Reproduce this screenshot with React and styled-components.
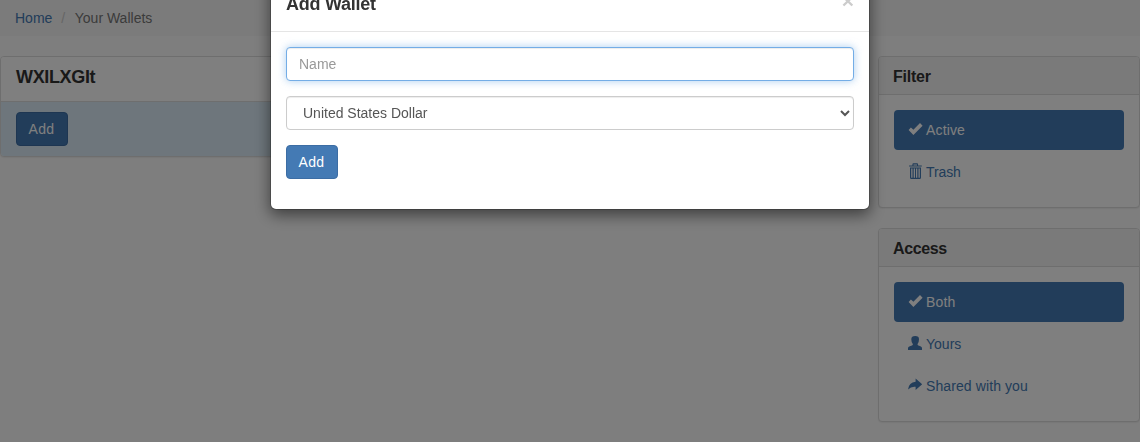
import React from 'react';
import styled, { createGlobalStyle } from 'styled-components';

const GlobalStyle = createGlobalStyle`
  *, *::before, *::after { box-sizing: border-box; }
  body {
    margin: 0;
    height: 442px;
    overflow: hidden;
    background: #fcfcfc;
    color: #333;
    font: 14px/20px "Liberation Sans", Arial, sans-serif;
  }
`;

const Breadcrumb = styled.ol`
  display: flex;
  margin: 0 0 20px;
  padding: 8px 15px;
  list-style: none;
  background: #f6f6f6;
`;

const Crumb = styled.li`
  color: #777;
  &:not(:first-child)::before {
    content: '/';
    padding: 0 9.5px 0 9px;
    color: #ccc;
  }
`;

const Link = styled.a`
  color: #447ab4;
  text-decoration: none;
`;

const Columns = styled.div`
  display: grid;
  grid-template-columns: 848px 262px;
  column-gap: 30px;
  align-items: start;
`;

const Sidebar = styled.aside`
  display: flex;
  flex-direction: column;
  gap: 20px;
`;

const Panel = styled.section`
  background: #fff;
  border: 1px solid #ddd;
  border-radius: 4px;
  box-shadow: 0 1px 1px rgba(0, 0, 0, 0.05);
  overflow: hidden;
`;

const PanelHeading = styled.header`
  height: ${(p) => (p.$large ? '45px' : '38px')};
  padding: ${(p) => (p.$large ? '10px 15px' : '10px 14px')};
  background: ${(p) => (p.$large ? '#fff' : '#f5f5f5')};
  border-bottom: 1px solid #ddd;
`;

const PanelTitle = styled.h3`
  margin: 0;
  font-size: ${(p) => (p.$large ? '18px' : '16px')};
  font-weight: 700;
  line-height: 20px;
  letter-spacing: ${(p) => p.$spacing || '0'};
`;

const PanelFooter = styled.footer`
  display: flex;
  padding: 10px 15px;
  background: #dcedf8;
`;

const PanelBody = styled.div`
  padding: 15px;
`;

const Button = styled.button`
  width: 52px;
  height: 34px;
  padding: 0 1px 0 0;
  color: #fff;
  font: inherit;
  letter-spacing: 0.3px;
  background: #447ab4;
  border: 1px solid #3c6da4;
  border-radius: 4px;
`;

const Pills = styled.nav`
  display: flex;
  flex-direction: column;
  gap: 2px;
`;

const Pill = styled.a`
  display: flex;
  align-items: center;
  gap: 4px;
  height: 40px;
  padding: 0 14px;
  color: ${(p) => (p.$active ? '#fff' : '#447ab4')};
  background: ${(p) => (p.$active ? '#447ab4' : 'transparent')};
  border-radius: 4px;
`;

const PillLabel = styled.span`
  letter-spacing: ${(p) => p.$spacing || '0'};
`;

const Icon = styled.svg`
  width: 14px;
  height: 16px;
  margin-bottom: 2px;
  overflow: visible;
  fill: currentColor;
`;

const Backdrop = styled.div`
  position: fixed;
  inset: 0;
  background: rgba(0, 0, 0, 0.5);
`;

const Overlay = styled.div`
  position: fixed;
  inset: 0;
  overflow: hidden;
`;

const Dialog = styled.div`
  width: 600px;
  margin: -26px auto 0;
  background: #fff;
  background-clip: padding-box;
  border: 1px solid rgba(0, 0, 0, 0.2);
  border-radius: 6px;
  box-shadow: 0 5px 15px rgba(0, 0, 0, 0.5);
`;

const DialogHeader = styled.header`
  display: flex;
  justify-content: space-between;
  height: 57px;
  padding: 15px;
  border-bottom: 1px solid #e5e5e5;
`;

const DialogTitle = styled.h4`
  margin: 0;
  font-size: 18px;
  font-weight: 700;
  line-height: 28px;
  letter-spacing: -0.25px;
`;

const Close = styled.button`
  height: 21px;
  padding: 0;
  color: #ccc;
  font: 700 21px/21px "Liberation Sans", Arial, sans-serif;
  background: none;
  border: 0;
`;

const Form = styled.form`
  display: flex;
  flex-direction: column;
  align-items: flex-start;
  gap: 15px;
  padding: 15px 15px 30px;
`;

const Input = styled.input`
  width: 100%;
  height: 34px;
  padding: 6px 12px;
  color: #555;
  font: inherit;
  background: #fff;
  border: 1px solid #74ade6;
  border-radius: 4px;
  outline: 0;
  box-shadow: inset 0 1px 1px rgba(0, 0, 0, 0.075), 0 0 8px rgba(116, 173, 230, 0.6);
  &::placeholder { color: #999; }
`;

const Select = styled.select`
  width: 100%;
  height: 34px;
  padding: 6px 12px;
  color: #555;
  font: inherit;
  background: #fff;
  border: 1px solid #ccc;
  border-radius: 4px;
  box-shadow: inset 0 1px 1px rgba(0, 0, 0, 0.075);
`;

const Check = () => (
  <Icon viewBox="0 0 14 16">
    <path d="M.6 8.9 2.9 6.4 5.4 8.7 12 2.1 14.6 4.7 5.4 13.9Z" />
  </Icon>
);

const Trash = () => (
  <Icon viewBox="0 0 14 16">
    <path
      fillRule="evenodd"
      d="M4.4 2.4V1.4Q4.4.3 5.5.3H9Q10.1.3 10.1 1.4V2.4H13.8V3.6H1.1V2.4ZM5.5 2.4H9V1.4H5.5ZM2 4.6H13V14.4Q13 15.9 11.6 15.9H3.4Q2 15.9 2 14.4ZM3.2 5.6V14.7H4.5V5.6ZM5.7 5.6V14.7H7V5.6ZM8 5.6V14.7H9.3V5.6ZM10.5 5.6V14.7H11.8V5.6Z"
    />
  </Icon>
);

const User = () => (
  <Icon viewBox="0 0 14 16">
    <path d="M3.3 4.3Q3.3 1 7.2 1T11 4.3Q11 7.4 9.6 9V10Q9.8 10.5 12.4 11.3 14 12 14 13V15H0V13Q0 12 1.8 11.3 4.6 10.5 4.8 10V9Q3.3 7.4 3.3 4.3Z" />
  </Icon>
);

const Share = () => (
  <Icon viewBox="0 0 14 16">
    <path d="M7.6 1.6 14.2 7.2 7.6 13V9.8Q3.2 9.2 0 12.4.9 5.2 7.6 4.7Z" />
  </Icon>
);

const filters = [
  { label: 'Active', icon: Check, active: true, spacing: '0.15px' },
  { label: 'Trash', icon: Trash, spacing: '-0.1px' },
];

const access = [
  { label: 'Both', icon: Check, active: true, spacing: '0.2px' },
  { label: 'Yours', icon: User },
  { label: 'Shared with you', icon: Share, spacing: '0.1px' },
];

function PillPanel({ title, items, spacing }) {
  return (
    <Panel>
      <PanelHeading>
        <PanelTitle $spacing={spacing}>{title}</PanelTitle>
      </PanelHeading>
      <PanelBody>
        <Pills>
          {items.map(({ label, icon: Glyph, active, spacing: s }) => (
            <Pill key={label} $active={active}>
              <Glyph />
              <PillLabel $spacing={s}>{label}</PillLabel>
            </Pill>
          ))}
        </Pills>
      </PanelBody>
    </Panel>
  );
}

export default function App() {
  return (
    <>
      <GlobalStyle />
      <Breadcrumb>
        <Crumb><Link>Home</Link></Crumb>
        <Crumb>Your Wallets</Crumb>
      </Breadcrumb>
      <Columns>
        <Panel>
          <PanelHeading $large>
            <PanelTitle $large $spacing="-0.35px">WXILXGIt</PanelTitle>
          </PanelHeading>
          <PanelFooter>
            <Button>Add</Button>
          </PanelFooter>
        </Panel>
        <Sidebar>
          <PillPanel title="Filter" items={filters} spacing="-0.25px" />
          <PillPanel title="Access" items={access} spacing="-0.4px" />
        </Sidebar>
      </Columns>
      <Backdrop />
      <Overlay>
        <Dialog>
          <DialogHeader>
            <DialogTitle>Add Wallet</DialogTitle>
            <Close>×</Close>
          </DialogHeader>
          <Form>
            <Input placeholder="Name" />
            <Select defaultValue="usd">
              <option value="usd">United States Dollar</option>
            </Select>
            <Button type="button">Add</Button>
          </Form>
        </Dialog>
      </Overlay>
    </>
  );
}
